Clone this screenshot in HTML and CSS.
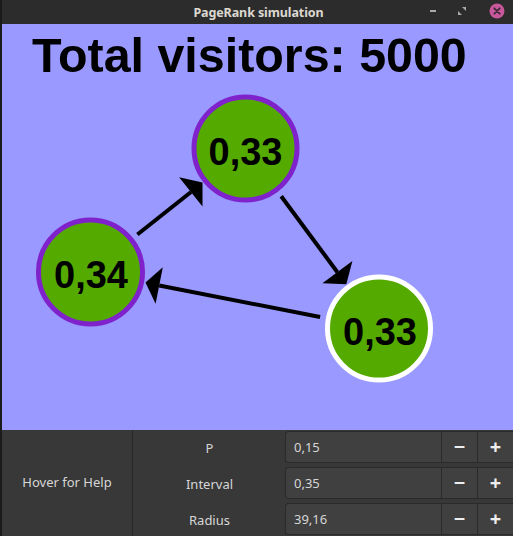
FILE: index.html
```html
<!DOCTYPE html>
<html>
<head>
<meta charset="utf-8">
<link rel="stylesheet" href="styles.css">
</head>
<body>
<div class="window">
  <header class="titlebar">
    <span class="title">PageRank simulation</span>
    <div class="controls">
      <span class="ctl min"></span>
      <svg class="ctl restore" width="8" height="8" viewBox="0 0 8 8"><path d="M8 0 L8 4 L4 0 Z M0 8 L0 4 L4 8 Z" fill="#a9a9a9"/></svg>
      <svg class="ctl close" width="16" height="16" viewBox="0 0 16 16"><circle cx="8" cy="8" r="7.5" fill="#c8579c"/><path d="M5.3 5.3 L10.7 10.7 M10.7 5.3 L5.3 10.7" stroke="#3a2a33" stroke-width="1.8" stroke-linecap="round"/></svg>
    </div>
  </header>
  <main class="canvas">
    <svg class="scene" width="511" height="406" viewBox="2 24 511 406">
      <rect x="2" y="24" width="511" height="406" fill="#9999ff"/>
      <text class="total" x="32" y="72">Total visitors: 5000</text>
      <g stroke="#000" stroke-width="4" fill="none">
        <line x1="137.4" y1="234.5" x2="191" y2="192"/>
        <line x1="281.2" y1="196.2" x2="337.4" y2="272.2"/>
        <line x1="320.1" y1="317" x2="159.2" y2="285.5"/>
      </g>
      <g fill="#000">
        <polygon points="202.5,182.4 179.1,177.2 202.5,206.4"/>
        <polygon points="346.3,284.3 352.4,261.1 322.4,283.3"/>
        <polygon points="145.5,282.6 162.8,267.2 155.6,303.8"/>
      </g>
      <circle cx="245.5" cy="148.5" r="51.5" fill="#55aa00" stroke="#7f22cc" stroke-width="5"/>
      <circle cx="90.5" cy="272" r="52" fill="#55aa00" stroke="#7f22cc" stroke-width="5"/>
      <circle cx="379" cy="328.5" r="51.5" fill="#55aa00" stroke="#ffffff" stroke-width="5"/>
      <text class="rank" x="245.5" y="165">0,33</text>
      <text class="rank" x="91" y="288">0,34</text>
      <text class="rank" x="380" y="345">0,33</text>
    </svg>
  </main>
  <section class="panel">
    <div class="help">Hover for Help</div>
    <div class="label">P</div>
    <div class="spin">
      <span class="value">0,15</span>
      <span class="btn">−</span>
      <span class="btn">+</span>
    </div>
    <div class="label">Interval</div>
    <div class="spin">
      <span class="value">0,35</span>
      <span class="btn">−</span>
      <span class="btn">+</span>
    </div>
    <div class="label">Radius</div>
    <div class="spin">
      <span class="value">39,16</span>
      <span class="btn">−</span>
      <span class="btn">+</span>
    </div>
  </section>
</div>
</body>
</html>
```

FILE: styles.css
```css
html, body {
  margin: 0;
  padding: 0;
  background: #2c2c2c;
}
.window {
  width: 513px;
  height: 536px;
  overflow: hidden;
  box-sizing: border-box;
  border-left: 2px solid #1b1b1b;
  display: flex;
  flex-direction: column;
  font-family: "Noto Sans", "DejaVu Sans", sans-serif;
}
.titlebar {
  height: 24px;
  flex: none;
  background: #2c2c2c;
  display: flex;
  align-items: center;
  justify-content: center;
  position: relative;
}
.title {
  color: #dcd8d0;
  font-weight: bold;
  font-size: 12.5px;
  letter-spacing: -0.1px;
  margin-left: 2px;
}
.controls {
  position: absolute;
  right: 8px;
  top: 3px;
  display: flex;
  align-items: center;
  height: 16px;
}
.ctl {
  display: block;
}
.min {
  width: 6px;
  height: 2px;
  background: #a9a9a9;
  margin-right: 22px;
}
.restore {
  margin-right: 23px;
}
.canvas {
  height: 406px;
  flex: none;
}
.scene {
  display: block;
}
.total {
  font-family: "Liberation Sans", Arial, sans-serif;
  font-weight: bold;
  font-size: 48.4px;
  fill: #000;
}
.rank {
  font-family: "Liberation Sans", Arial, sans-serif;
  font-weight: bold;
  font-size: 38px;
  fill: #000;
  text-anchor: middle;
}
.panel {
  flex: 1;
  background: #383838;
  display: grid;
  grid-template-columns: 131px 152px 228px;
  grid-template-rows: 36px 36px 36px;
  color: #d6d6d6;
  font-size: 13px;
}
.help {
  grid-row: 1 / span 3;
  grid-column: 1;
  border-right: 1px solid #262626;
  display: flex;
  align-items: center;
  justify-content: center;
  padding-bottom: 2px;
  box-sizing: border-box;
  height: 106px;
}
.label {
  display: flex;
  align-items: center;
  justify-content: center;
  padding-left: 1px;
}
.spin {
  margin: 1px 0 3px 0;
  display: flex;
  background: #404040;
  border: 1px solid #2a2a2a;
  border-right: none;
  border-radius: 4px 0 0 4px;
  height: 32px;
  box-sizing: border-box;
}
.value {
  flex: 1;
  display: flex;
  align-items: center;
  padding-left: 8px;
}
.btn {
  width: 36px;
  border-left: 1px solid #2a2a2a;
  display: flex;
  align-items: center;
  justify-content: center;
  font-size: 20px;
  font-weight: bold;
  color: #eeeeee;
  padding-bottom: 2px;
  box-sizing: border-box;
}
```
